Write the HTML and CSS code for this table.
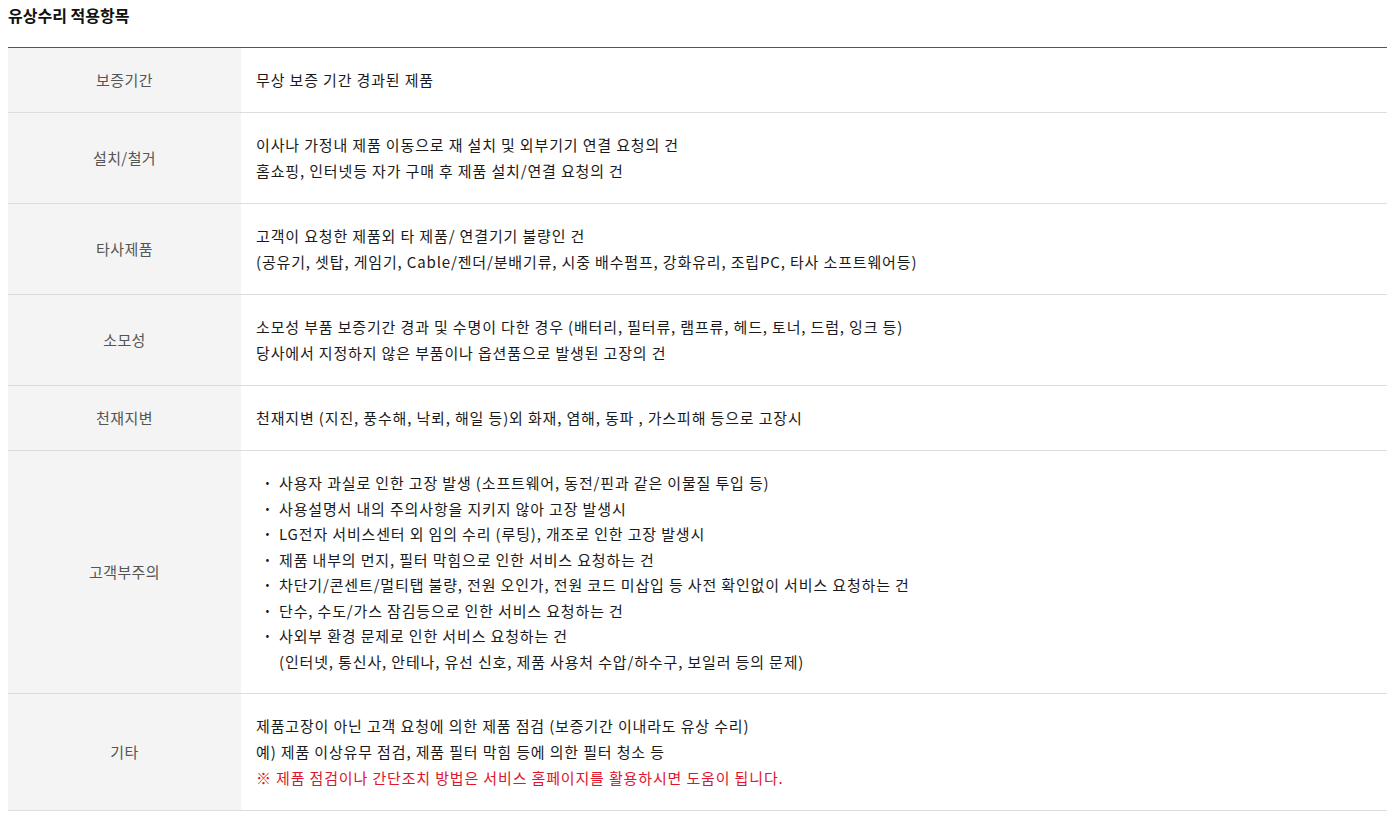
FILE: index.html
```html
<!DOCTYPE html>
<html>
<head>
    <meta charset="utf-8">
    <title>유상수리 적용항목</title>
    <link rel="stylesheet" href="styles.css">
</head>
<body>
    <h3 class="title">유상수리 적용항목</h3>
    <table class="repair-table">
        <tr>
            <th>보증기간</th>
            <td>무상 보증 기간 경과된 제품</td>
        </tr>
        <tr>
            <th>설치/철거</th>
            <td>이사나 가정내 제품 이동으로 재 설치 및 외부기기 연결 요청의 건<br>홈쇼핑, 인터넷등 자가 구매 후 제품 설치/연결 요청의 건</td>
        </tr>
        <tr>
            <th>타사제품</th>
            <td>고객이 요청한 제품외 타 제품/ 연결기기 불량인 건<br>(공유기, 셋탑, 게임기, Cable/젠더/분배기류, 시중 배수펌프, 강화유리, 조립PC, 타사 소프트웨어등)</td>
        </tr>
        <tr>
            <th>소모성</th>
            <td>소모성 부품 보증기간 경과 및 수명이 다한 경우 (배터리, 필터류, 램프류, 헤드, 토너, 드럼, 잉크 등)<br>당사에서 지정하지 않은 부품이나 옵션품으로 발생된 고장의 건</td>
        </tr>
        <tr>
            <th>천재지변</th>
            <td>천재지변 (지진, 풍수해, 낙뢰, 해일 등)외 화재, 염해, 동파 , 가스피해 등으로 고장시</td>
        </tr>
        <tr>
            <th>고객부주의</th>
            <td>
                <ul class="dot-list">
                    <li>사용자 과실로 인한 고장 발생 (소프트웨어, 동전/핀과 같은 이물질 투입 등)</li>
                    <li>사용설명서 내의 주의사항을 지키지 않아 고장 발생시</li>
                    <li>LG전자 서비스센터 외 임의 수리 (루팅), 개조로 인한 고장 발생시</li>
                    <li>제품 내부의 먼지, 필터 막힘으로 인한 서비스 요청하는 건</li>
                    <li>차단기/콘센트/멀티탭 불량, 전원 오인가, 전원 코드 미삽입 등 사전 확인없이 서비스 요청하는 건</li>
                    <li>단수, 수도/가스 잠김등으로 인한 서비스 요청하는 건</li>
                    <li>사외부 환경 문제로 인한 서비스 요청하는 건<br>(인터넷, 통신사, 안테나, 유선 신호, 제품 사용처 수압/하수구, 보일러 등의 문제)</li>
                </ul>
            </td>
        </tr>
        <tr>
            <th>기타</th>
            <td>제품고장이 아닌 고객 요청에 의한 제품 점검 (보증기간 이내라도 유상 수리)<br>예) 제품 이상유무 점검, 제품 필터 막힘 등에 의한 필터 청소 등<br><span class="notice">※ 제품 점검이나 간단조치 방법은 서비스 홈페이지를 활용하시면 도움이 됩니다.</span></td>
        </tr>
    </table>
</body>
</html>
```

FILE: styles.css
```css
body { margin: 8px; font-family: "Noto Sans CJK KR", "Noto Sans", sans-serif; color: #333; background: #fff; }
.title { margin: 0 0 25px; font-size: 16px; line-height: 14px; font-weight: 700; color: #111; }
.repair-table { width: 1379px; border-collapse: collapse; border-top: 1px solid #555; font-size: 15px; letter-spacing: 0.85px; }
.repair-table th, .repair-table td {
    border-bottom: 1px solid #ddd;
    padding: 19px 15px;
    line-height: 26px;
    vertical-align: middle;
}
.repair-table th {
    width: 203px;
    background: #f4f4f4;
    color: #555;
    font-weight: 400;
    text-align: center;
    letter-spacing: 0.4px;
}
.repair-table td { text-align: left; color: #1a1a1a; }
.dot-list { list-style: none; margin: 0; padding: 0; }
.dot-list li { position: relative; padding-left: 23px; line-height: 25.5px; }
.dot-list li::before { content: "·"; position: absolute; left: 7px; top: 0; font-weight: 700; }
.notice { color: #e0142c; }
```
